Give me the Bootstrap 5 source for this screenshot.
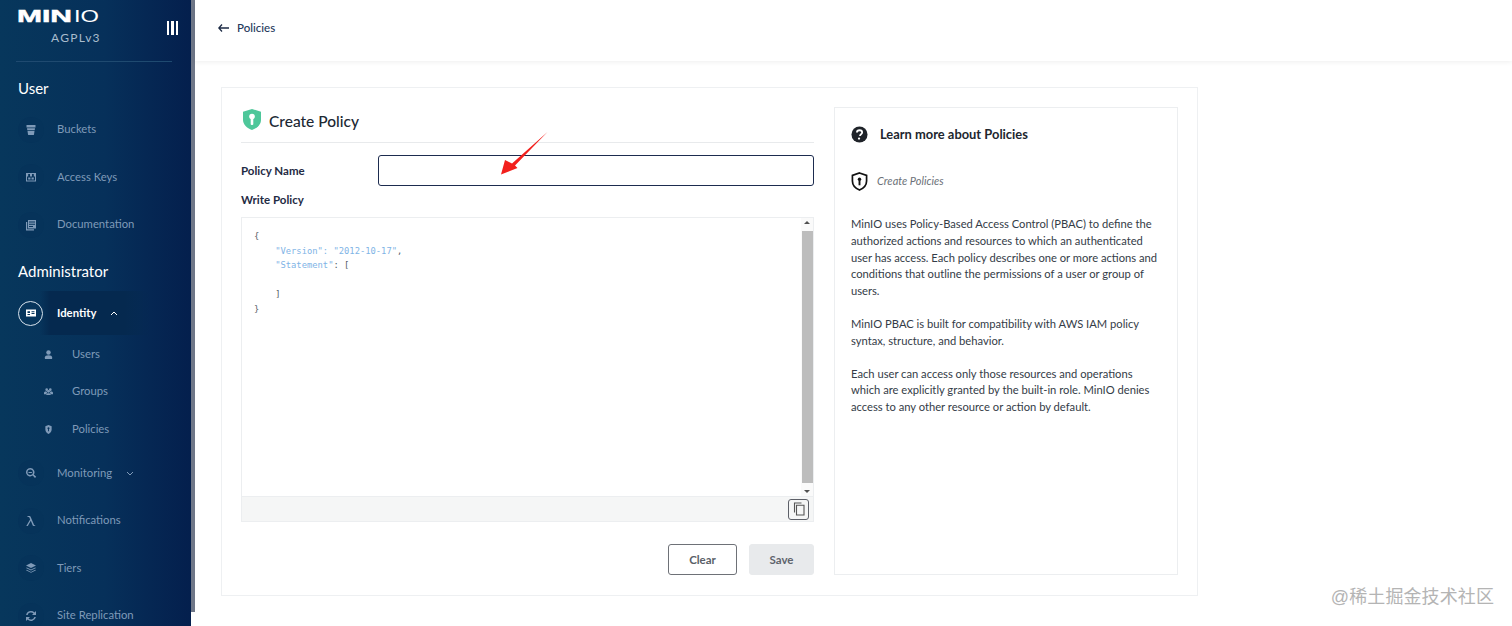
<!DOCTYPE html>
<html lang="en">
<head>
<meta charset="utf-8">
<title>Create Policy</title>
<link href="https://cdn.jsdelivr.net/npm/bootstrap@5.3.0/dist/css/bootstrap.min.css" rel="stylesheet">
<style>
html,body{height:626px;overflow:hidden;background:#fff}
body{font-family:Lato,"Liberation Sans",sans-serif;color:#1f2a3c;font-size:12px}
.shell{height:626px}
.sidebar{width:191px;height:626px;overflow:hidden;flex:none;background:linear-gradient(90deg,#07375c 0%,#06305a 55%,#041f4d 100%);color:#fff}
.sbar{width:4px;height:612px;background:#6f7788;flex:none}
.brand{height:62px;margin:0 19px 0 16px;border-bottom:1px solid #1f4a70;position:relative}
.logo-svg{display:block;position:absolute;left:1px;top:8px;width:82px;height:16px}
.logo-svg text{font-family:"Liberation Sans",sans-serif;font-size:16.5px;fill:#fff}
.logo-sub{position:absolute;left:35px;top:31px;font-size:12px;line-height:14px;letter-spacing:1.3px;color:#a9bccd;white-space:nowrap}
.burger{position:absolute;right:-6px;top:21px;width:11px;height:14px;display:flex;justify-content:space-between}
.burger i{width:2.4px;background:#fff;display:block}
.sec-title{font-size:15px;line-height:20px;color:#fff;padding-left:18px}
.sec-user{margin-top:16px;margin-bottom:8.2px}
.sec-admin{margin-top:13px;margin-bottom:10px}
.nav-row{display:flex;align-items:center;height:47.4px;padding-left:18px;color:#7f9ab8;font-size:11.3px;white-space:nowrap}
.nav-ic{width:26px;height:26px;border-radius:50%;background:#06335a;display:flex;align-items:center;justify-content:center;margin-right:13px;flex:none}
.nav-ic svg{width:12px;height:12px;fill:#7f9ab8}
.nav-row.active{color:#fff;font-weight:700;height:44px;background:linear-gradient(90deg,transparent 40px,#05294f 50px,#05294f 125px,transparent 150px)}
.nav-row.active .nav-ic{width:25px;height:25px;background:transparent;border:1px solid #d7e2ec;margin-right:14px}
.nav-row.active .nav-ic svg{fill:#fff}
.chev{width:8px;height:5px;margin-left:14px;fill:none;stroke:currentColor;stroke-width:1}
.sub-row{display:flex;align-items:center;height:37.6px;padding-left:44px;color:#7f9ab8;font-size:11.3px}
.sub-row svg{width:9px;height:9px;fill:#7f9ab8;margin-right:19px;flex:none}
.sub-group{padding-bottom:1.5px}
.main-area{flex:1 1 auto;min-width:0;position:relative}
.topbar{height:61px;background:#fff;box-shadow:0 1px 5px rgba(0,0,0,.07);padding:0 0 5px 23px;font-size:11.5px;color:#24395c;font-weight:500;position:relative;z-index:1}
.topbar svg{width:11px;height:8px;margin-right:8px}
.panel-wrap{padding:26px 0 0 26px}
.policy-box{width:977px;height:509px;border:1px solid #eef0f2;padding:19px 20px 20px 19px;display:flex;gap:20px}
.form-col{width:573px;flex:none}
.form-head{height:36px;border-bottom:1px solid #e8eaec;gap:7px;padding-left:1px}
.form-head h1{font-size:15.5px;font-weight:500;line-height:20px;margin:0;color:#202833;position:relative;top:-4px}
.form-head svg{width:20px;height:23px;position:relative;top:-5px}
.field-row{margin-top:12px;height:31px}
.field-lbl{width:137px;font-size:11.5px;font-weight:700;color:#1f2b44}
.name-input{width:436px;height:31px;border:1px solid #1d2c4f;border-radius:3px;background:#fff;padding:0 8px;box-shadow:none}
.write-lbl{font-size:11.5px;font-weight:700;color:#1f2b44;margin-top:6px;line-height:16px}
.code-box{margin-top:9px;height:305px;border:1px solid #eceef0;background:#fff;position:relative;display:flex;flex-direction:column}
.code-main{flex:1 1 auto;height:279px;display:flex;position:relative}
.code-text{flex:1 1 auto;padding:11px 12px;font-family:"DejaVu Sans Mono","Liberation Mono",monospace;font-size:8.8px;line-height:14.6px;color:#555d66;overflow:hidden}
.code-line{height:14.6px;white-space:nowrap}
.code-in{padding-left:21.2px}
.code-key{color:#80b4e6}
.scroll-t{width:12px;flex:none;background:#fafafa;display:flex;flex-direction:column;align-items:center;justify-content:space-between;padding:3px 0}
.scroll-t b{display:block;width:11px;height:252px;background:#bdbdbd}
.tri-u,.tri-d{width:0;height:0;border-left:3.5px solid transparent;border-right:3.5px solid transparent}
.tri-u{border-bottom:3.5px solid #505050}
.tri-d{border-top:3.5px solid #505050}
.code-foot{height:25px;background:#f5f6f6;border-top:1px solid #eceef0;display:flex;justify-content:flex-end;align-items:center;padding-right:4px}
.copy-btn{width:21px;height:21px;border:1px solid #5d6068;border-radius:3px;background:#fff0;padding:0;display:flex;align-items:center;justify-content:center}
.copy-btn svg{width:12px;height:14px}
.act-row{margin-top:22px;gap:12px}
.btn-clear,.btn-save{height:31px;font-size:11.5px;font-weight:700;border-radius:3px;padding:0;display:flex;align-items:center;justify-content:center}
.btn-clear{width:69px;border:1px solid #6e7177;color:#5a5f68;background:#fff}
.btn-save{width:65px;border:1px solid #e8eaec;color:#5f646c;background:#e8eaec}
.help-box{width:344px;height:468px;border:1px solid #eceef0;padding:0 16px;flex:none;font-size:11.2px;line-height:16.8px;color:#343c47}
.help-head{height:52px;gap:12px;font-weight:700;font-size:12.9px;color:#21262e}
.help-head svg{width:17px;height:17px}
.help-sub{margin-top:10px;height:22px;gap:9px;font-style:italic;color:#6c7178;font-size:11px}
.help-sub svg{width:17px;height:19px}
.help-text{margin:24px 0 16px;width:310px}
.help-text.tight{margin-top:0}
.watermark{position:absolute;right:18px;bottom:19px;font-family:"Liberation Sans","Noto Sans CJK SC",sans-serif;font-size:18px;line-height:20px;color:#b4b4b4;white-space:nowrap;letter-spacing:.1px}
.red-arrow{position:absolute;left:305px;top:131px;width:48px;height:44px}
</style>
</head>
<body>
<div class="shell d-flex">
  <aside class="sidebar">
    <div class="brand">
      <svg class="logo-svg" viewBox="0 0 82 16"><text x="0" y="14" textLength="55" lengthAdjust="spacingAndGlyphs" font-weight="700" stroke="#fff" stroke-width=".5">MIN</text><text x="57" y="14" textLength="25" lengthAdjust="spacingAndGlyphs">IO</text></svg>
      <div class="logo-sub">AGPLv3</div>
      <div class="burger"><i></i><i></i><i></i></div>
    </div>
    <div class="sec-title sec-user">User</div>
    <div class="nav-row"><span class="nav-ic"><svg viewBox="0 0 12 12"><path d="M1.500 1h9v2.600h-9zM2 4.300h8L9.700 6.200H2.300zM2.500 6.900h7L9 10.500c-.1.400-.4.600-.8.600H3.800c-.4 0-.7-.2-.8-.6z"/></svg></span>Buckets</div>
    <div class="nav-row"><span class="nav-ic"><svg viewBox="0 0 12 12"><path d="M1 2h10v8.500H1zm1 3.500v4h8v-4H8.800V3H7v2.500H5V3H3.200v2.500zM3.200 6.500h2.300v2H3.200zM6.500 6.500h2.300v2H6.500z" fill-rule="evenodd"/></svg></span>Access Keys</div>
    <div class="nav-row"><span class="nav-ic"><svg viewBox="0 0 12 12"><path d="M3 1h8v8.500H3zM4 2.500v1h6v-1zM4 4.800v1h6v-1zM4 7v1h4V7zM1 3h1.200v7.300H9V11.500H1z" fill-rule="evenodd"/></svg></span>Documentation</div>
    <div class="sec-title sec-admin">Administrator</div>
    <div class="nav-row active"><span class="nav-ic"><svg viewBox="0 0 12 12"><path d="M1 2.500h10v7H1zM2.500 4.200v1.800h2.500V4.200zM6.500 4.200v1h3v-1zM6.500 6v1h3V6zM2.500 7v1h2.500V7z" fill-rule="evenodd"/></svg></span>Identity<svg class="chev" viewBox="0 0 8 5"><path d="M1 4l3-3 3 3"/></svg></div>
    <div class="sub-group">
      <div class="sub-row"><svg viewBox="0 0 10 10"><circle cx="5" cy="2.800" r="2.500"/><path d="M1 10V8c0-1.500 1.500-2.300 4-2.300S9 6.500 9 8v2z"/></svg>Users</div>
      <div class="sub-row"><svg viewBox="0 0 10 10"><circle cx="3" cy="3" r="1.500"/><circle cx="7" cy="3" r="1.500"/><circle cx="5" cy="4.800" r="1.500"/><path d="M0 6.500c0-1 1-1.800 2.500-1.800l1 1.500-1 1.800H0zM10 6.500c0-1-1-1.800-2.500-1.800l-1 1.500 1 1.800H10zM2.500 9c0-1.300 1-2 2.500-2s2.500.7 2.500 2z"/></svg>Groups</div>
      <div class="sub-row"><svg viewBox="0 0 10 10"><path d="M5 0l3.500 1.400v3.600C8.500 7.500 6.800 9.300 5 10 3.200 9.300 1.500 7.500 1.500 5V1.400zM5 2.500a1.100 1.100 0 0 0-.5 2.100V7h1V4.600A1.100 1.100 0 0 0 5 2.500z" fill-rule="evenodd"/></svg>Policies</div>
    </div>
    <div class="nav-row"><span class="nav-ic"><svg viewBox="0 0 12 12"><path d="M5.200 1a4.200 4.200 0 1 0 2.500 7.600L10 11l1.200-1.200-2.400-2.300A4.200 4.200 0 0 0 5.200 1zm0 1.500a2.700 2.700 0 1 1 0 5.400 2.700 2.700 0 0 1 0-5.400zM3.500 5h3.400v1H3.500z" fill-rule="evenodd"/></svg></span>Monitoring<svg class="chev" viewBox="0 0 8 5"><path d="M1 1l3 3 3-3"/></svg></div>
    <div class="nav-row"><span class="nav-ic"><svg viewBox="0 0 12 12"><path d="M2.500 1h1.800c.8 0 1.200.4 1.500 1.200L9 9.800c.2.400.5.500 1.200.5V11H8.700c-.6 0-.9-.3-1.100-.8L5.800 5.700 2.800 11H1.300l3.800-6.600-.6-1.600c-.2-.5-.4-.7-1-.7h-1z"/></svg></span>Notifications</div>
    <div class="nav-row"><span class="nav-ic"><svg viewBox="0 0 12 12"><path d="M6 1l5 2.500L6 6 1 3.500zM1.800 5.400L6 7.500l4.200-2.100.8.500L6 8.400 1 5.900zM1.800 7.800L6 9.900l4.200-2.100.8.500L6 10.800 1 8.300z"/></svg></span>Tiers</div>
    <div class="nav-row"><span class="nav-ic"><svg viewBox="0 0 12 12"><path d="M6 1a5 5 0 0 1 3.500 1.400L11 1v4H7l1.500-1.500A3.500 3.500 0 0 0 2.600 5H1.100A5 5 0 0 1 6 1zM1 7h4L3.500 8.500A3.500 3.500 0 0 0 9.400 7h1.500A5 5 0 0 1 2.500 9.600L1 11z"/></svg></span>Site Replication</div>
  </aside>
  <div class="sbar"></div>
  <main class="main-area">
    <div class="topbar d-flex align-items-center">
      <svg viewBox="0 0 11 8"><path d="M4 .5L.8 4 4 7.500M1 4h10" fill="none" stroke="#1c2a44" stroke-width="1.300"/></svg>Policies
    </div>
    <div class="panel-wrap">
      <section class="policy-box">
        <div class="form-col">
          <div class="form-head d-flex align-items-center">
            <svg viewBox="0 0 20 22"><path d="M10 .5l9 2.800v8c0 4.800-3.800 8.400-9 10.200C4.800 19.700 1 16.100 1 11.300v-8z" fill="#4ec79a"/><circle cx="10" cy="8" r="2.800" fill="#fff"/><rect x="8.700" y="9" width="2.600" height="7.500" rx="1" fill="#fff"/></svg>
            <h1>Create Policy</h1>
          </div>
          <div class="field-row d-flex align-items-center">
            <label class="field-lbl" for="pn">Policy Name</label>
            <input id="pn" class="name-input" type="text">
          </div>
          <div class="write-lbl">Write Policy</div>
          <div class="code-box">
            <div class="code-main">
              <div class="code-text">
                <div class="code-line">{</div>
                <div class="code-line code-in"><span class="code-key">"Version": "2012-10-17"</span><span>,</span></div>
                <div class="code-line code-in"><span class="code-key">"Statement"</span><span>: [</span></div>
                <div class="code-line"></div>
                <div class="code-line code-in">]</div>
                <div class="code-line">}</div>
              </div>
              <div class="scroll-t"><span class="tri-u"></span><b></b><span class="tri-d"></span></div>
            </div>
            <div class="code-foot">
              <button class="copy-btn" type="button" aria-label="Copy"><svg viewBox="0 0 12 14"><path d="M8.500 1H1.500v9.500M3.500 3.200h7.500V13H3.500z" fill="none" stroke="#555" stroke-width="1.100"/></svg></button>
            </div>
          </div>
          <div class="act-row d-flex justify-content-end">
            <button class="btn btn-clear" type="button">Clear</button>
            <button class="btn btn-save" type="button">Save</button>
          </div>
        </div>
        <aside class="help-box">
          <div class="help-head d-flex align-items-center">
            <svg viewBox="0 0 18 18"><circle cx="9" cy="9" r="8.500" fill="#1f2329"/><path d="M6.300 7c0-1.600 1.200-2.500 2.800-2.500s2.700.9 2.700 2.300c0 2-2.300 1.900-2.300 3.700" fill="none" stroke="#fff" stroke-width="1.900"/><circle cx="8.500" cy="13.300" r="1.200" fill="#fff"/></svg>
            <span>Learn more about Policies</span>
          </div>
          <div class="help-sub d-flex align-items-center">
            <svg viewBox="0 0 18 20"><path d="M9 1l7.500 2.500v6c0 4.500-3.200 7.700-7.500 9.500-4.300-1.800-7.500-5-7.500-9.500v-6z" fill="none" stroke="#111" stroke-width="1.800"/><circle cx="9" cy="7.500" r="1.800" fill="#111"/><rect x="8" y="8" width="2" height="6" fill="#111"/></svg>
            <span>Create Policies</span>
          </div>
          <p class="help-text">MinIO uses Policy-Based Access Control (PBAC) to define the authorized actions and resources to which an authenticated user has access. Each policy describes one or more actions and conditions that outline the permissions of a user or group of users.</p>
          <p class="help-text tight">MinIO PBAC is built for compatibility with AWS IAM policy syntax, structure, and behavior.</p>
          <p class="help-text tight">Each user can access only those resources and operations which are explicitly granted by the built-in role. MinIO denies access to any other resource or action by default.</p>
        </aside>
      </section>
    </div>
    <svg class="red-arrow" viewBox="0 0 48 44"><path d="M47.500 1L12 32.500 5 29 1 43.500 17.500 37 15 34.500z" fill="#f2201d"/></svg>
    <div class="watermark">@稀土掘金技术社区</div>
  </main>
</div>
<script src="https://cdn.jsdelivr.net/npm/bootstrap@5.3.0/dist/js/bootstrap.bundle.min.js"></script>
</body>
</html>
